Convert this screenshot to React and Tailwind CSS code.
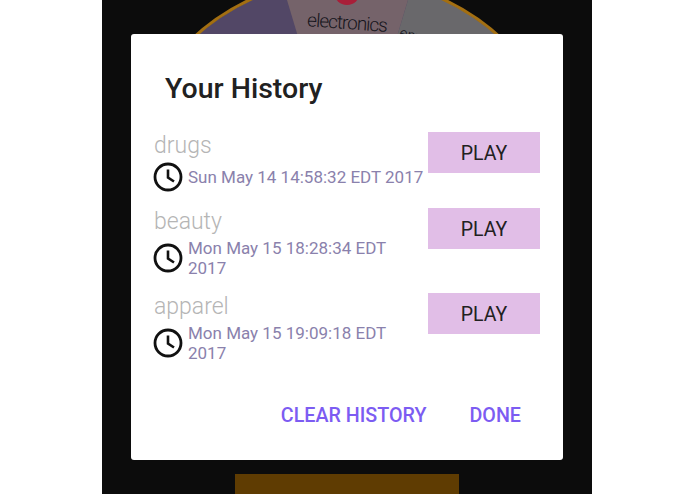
const font = { fontFamily: "Roboto, sans-serif" };

function ClockIcon() {
  return (
    <svg width="30" height="30" viewBox="0 0 30 30" fill="none" stroke="#111111" strokeWidth="2.8" className="shrink-0">
      <circle cx="15" cy="15" r="13" />
      <path d="M15 7.5V15.5L21 19.5" strokeWidth="2.6" />
    </svg>
  );
}

function Wheel() {
  return (
    <svg className="absolute left-0 top-0" width="490" height="40" viewBox="102 0 490 40">
      <defs>
        <clipPath id="wheel">
          <circle cx="347" cy="206" r="227" />
        </clipPath>
      </defs>
      <g clipPath="url(#wheel)">
        <rect x="102" y="0" width="490" height="40" fill="#524766" />
        <path d="M287 0H408L396 40H299Z" fill="#75636a" />
        <path d="M408 0H592V40H396Z" fill="#69686b" />
      </g>
      <circle cx="347" cy="206" r="228" fill="none" stroke="#a36f12" strokeWidth="3" />
      <circle cx="347" cy="-8" r="13" fill="#a81f39" />
      <text x="347" y="29" textAnchor="middle" fontSize="19" fill="#15151c" letterSpacing="-1" transform="rotate(4 346 24)" fontFamily="Roboto, sans-serif" fontWeight="300">electronics</text>
      <text x="399" y="37" fontSize="15" fill="#15151c" transform="rotate(16 399 35)" fontFamily="Roboto, sans-serif" fontWeight="300">env</text>
    </svg>
  );
}

function Row({ name, date, className }) {
  return (
    <div className={`flex items-start justify-between ${className}`}>
      <div className="mt-[1px] w-[273px]">
        <div className="pl-[1px] text-[23px] font-light leading-[26px] text-[#b5b5b5]">{name}</div>
        <div className="mt-[3px] flex items-center gap-[5px]">
          <ClockIcon />
          <div className="text-[17px] leading-[20px] text-[#8a81ac]">{date}</div>
        </div>
      </div>
      <button className="h-[41px] w-[112px] bg-[#e1bee7] pt-[2px] text-[19.5px] text-[#212121]">PLAY</button>
    </div>
  );
}

export default function App() {
  return (
    <div className="h-[494px] w-[695px] bg-white pl-[102px]" style={font}>
      <div className="relative h-[494px] w-[490px] overflow-hidden bg-[#0c0c0c] pt-[34px]">
        <Wheel />
        <div className="relative mx-[29px] flex h-[426px] w-[432px] flex-col rounded-[3px] bg-white">
          <h1 className="ml-[34px] mt-[37px] text-[28.5px] font-medium leading-[36px] text-[#212121]">Your History</h1>
          <div className="ml-[22px] mr-[23px] mt-[25px] flex flex-col">
            <Row name="drugs" date="Sun May 14 14:58:32 EDT 2017" className="h-[76px]" />
            <Row name="beauty" date="Mon May 15 18:28:34 EDT 2017" className="h-[85px]" />
            <Row name="apparel" date="Mon May 15 19:09:18 EDT 2017" className="h-[85px]" />
          </div>
          <div className="mb-[32px] mr-[42px] mt-auto flex justify-end gap-[43px] text-[19.7px] font-medium leading-[24px] text-[#7c5cf2]">
            <button>CLEAR HISTORY</button>
            <button>DONE</button>
          </div>
        </div>
        <div className="mx-auto mt-[14px] h-[20px] w-[224px] bg-[#5f3c02]" />
      </div>
    </div>
  );
}
